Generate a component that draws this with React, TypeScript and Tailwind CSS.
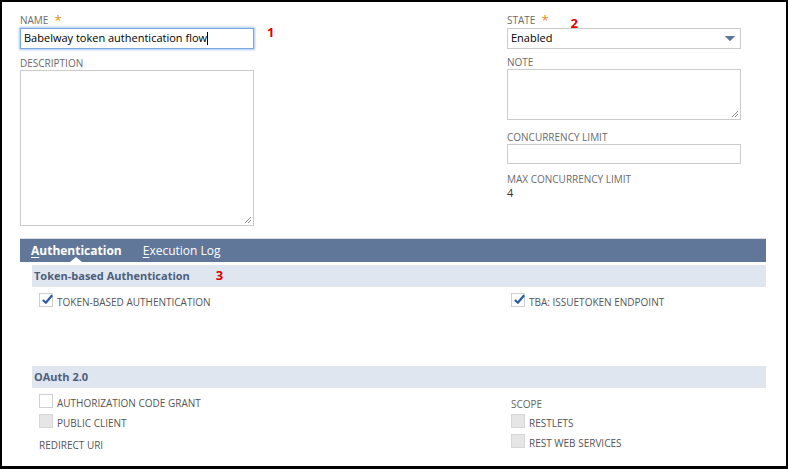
import React from "react";

const FONT = { fontFamily: '"Open Sans", "Liberation Sans", sans-serif' };

function Label({ children, required }: { children: React.ReactNode; required?: boolean }) {
  return (
    <div className="flex items-center h-[13px] text-[10px] leading-[13px] text-[#6b6b6b] uppercase">
      <span>{children}</span>
      {required && <span className="ml-[6px] text-[#e28b14] text-[13px] leading-[13px]">*</span>}
    </div>
  );
}

function Check({ checked, disabled }: { checked?: boolean; disabled?: boolean }) {
  return (
    <span
      className={
        "relative inline-block w-[14px] h-[14px] border shrink-0 " +
        (disabled ? "bg-[#e6e6e6] border-[#d6d6d6]" : "bg-white border-[#cfcfcf]")
      }
    >
      {checked && (
        <svg viewBox="0 0 14 14" className="absolute left-[1px] top-[-1px] w-[13px] h-[13px]">
          <path d="M2 7.5 L5.2 10.5 L12 2.5" fill="none" stroke="#2c5ba3" strokeWidth="2.4" strokeLinejoin="round" />
        </svg>
      )}
    </span>
  );
}

function CheckRow({ label, checked, disabled }: { label: string; checked?: boolean; disabled?: boolean }) {
  return (
    <div className="flex items-center gap-[4px] h-[14px]">
      <Check checked={checked} disabled={disabled} />
      <span className="text-[10px] text-[#555555] uppercase leading-[14px] pt-[4px]">{label}</span>
    </div>
  );
}

function SectionHeader({ title, mark }: { title: string; mark?: string }) {
  return (
    <div className="ml-[12px] h-[22px] bg-[#e0e6ef] flex items-center pl-[2px]">
      <span className="text-[11px] font-bold text-[#4d5e7c]">{title}</span>
      {mark && <span className="ml-[26px] text-[13px] font-bold text-[#e00000]">{mark}</span>}
    </div>
  );
}

function Resize() {
  return (
    <svg viewBox="0 0 8 8" className="absolute right-[1px] bottom-[1px] w-[8px] h-[8px]">
      <path d="M7 1 L1 7 M7 4 L4 7" stroke="#888" strokeWidth="1" />
    </svg>
  );
}

export default function App() {
  return (
    <div
      style={FONT}
      className="w-[788px] h-[469px] bg-white border-t-2 border-l-2 border-r-2 border-b-[3px] border-black overflow-hidden"
    >
      <div className="pl-[18px] pt-[12px]">
        {/* top fields */}
        <div className="flex">
          <div className="w-[234px]">
            <Label required>Name</Label>
            <div className="flex items-start mt-[1px]">
              <div className="w-[234px] h-[21px] border border-[#7aa7e0] shadow-[0_0_2px_1px_#a9c8f0] flex items-center px-[3px] text-[11px] text-black shrink-0">
                Babelway token authentication flow<span className="inline-block w-px h-[13px] bg-black" />
              </div>
              <span className="ml-[13px] -mt-[4px] text-[13px] font-bold text-[#e00000] leading-[16px]">1</span>
            </div>
            <div className="mt-[8px]">
              <Label>Description</Label>
            </div>
            <div className="relative w-[234px] h-[156px] border border-[#cccccc]">
              <Resize />
            </div>
          </div>

          <div className="ml-[253px] w-[234px]">
            <div className="flex items-start h-[13px]">
              <Label required>State</Label>
              <span className="ml-[22px] relative top-[3px] text-[13px] font-bold text-[#e00000] leading-[13px]">2</span>
            </div>
            <div className="w-[234px] h-[21px] mt-[1px] border border-[#cccccc] flex items-center justify-between px-[3px] text-[11px] text-black">
              <span>Enabled</span>
              <svg viewBox="0 0 12 8" className="w-[12px] h-[7px] mr-[1px]">
                <path d="M0 1 L12 1 L6 7 Z" fill="#5c769c" />
              </svg>
            </div>
            <div className="mt-[7px]">
              <Label>Note</Label>
            </div>
            <div className="relative w-[234px] h-[51px] border border-[#cccccc]">
              <Resize />
            </div>
            <div className="mt-[11px]">
              <Label>Concurrency Limit</Label>
            </div>
            <div className="w-[234px] h-[20px] border border-[#cccccc]" />
            <div className="mt-[9px]">
              <Label>Max Concurrency Limit</Label>
            </div>
            <div className="text-[11px] text-[#333333] leading-[14px]">4</div>
          </div>
        </div>

        {/* tabs */}
        <div className="mt-[12px] w-[746px] border-t border-[#d8dde5]">
          <div className="h-[23px] bg-[#607799] flex items-center text-[12px] text-white relative">
            <span className="ml-[11px] font-bold">
              <span className="underline underline-offset-2">A</span>uthentication
            </span>
            <span className="ml-[21px]">
              <span className="underline underline-offset-2">E</span>xecution Log
            </span>
            <span className="absolute left-[50px] bottom-0 w-0 h-0 border-l-[6px] border-r-[6px] border-b-[5px] border-l-transparent border-r-transparent border-b-white" />
          </div>

          <div className="mt-[3px]">
            <SectionHeader title="Token-based Authentication" mark="3" />
          </div>
          <div className="flex mt-[6px] pl-[19px]">
            <div className="w-[472px]">
              <CheckRow label="Token-based Authentication" checked />
            </div>
            <CheckRow label="TBA: IssueToken Endpoint" checked />
          </div>

          <div className="mt-[59px]">
            <SectionHeader title="OAuth 2.0" />
          </div>
          <div className="flex pl-[19px]">
            <div className="w-[472px] flex flex-col pt-[6px]">
              <CheckRow label="Authorization Code Grant" />
              <div className="mt-[6px]">
                <CheckRow label="Public Client" disabled />
              </div>
              <div className="mt-[11px] text-[10px] text-[#555555] uppercase leading-[13px]">Redirect URI</div>
            </div>
            <div className="flex flex-col pt-[10px]">
              <div className="text-[10px] text-[#666666] uppercase leading-[13px]">Scope</div>
              <div className="mt-[3px]">
                <CheckRow label="RESTlets" disabled />
              </div>
              <div className="mt-[6px]">
                <CheckRow label="REST Web Services" disabled />
              </div>
            </div>
          </div>
        </div>
      </div>
    </div>
  );
}
